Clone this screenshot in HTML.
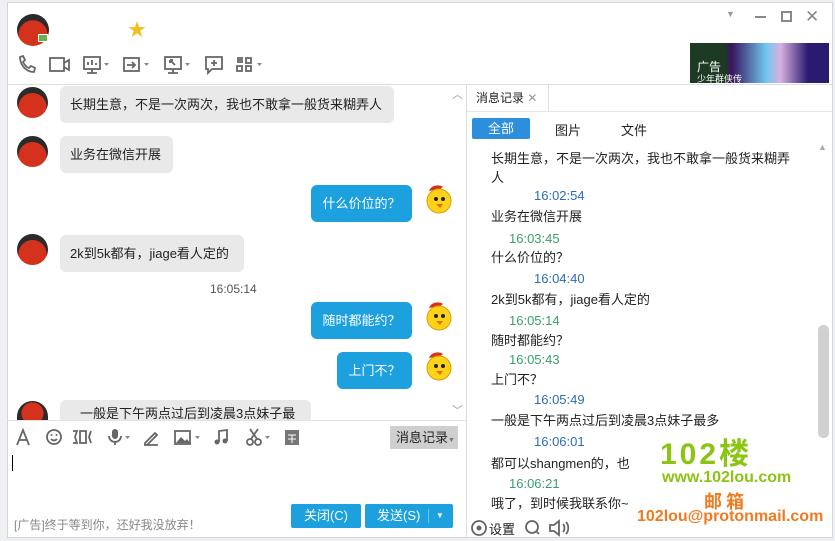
<!DOCTYPE html>
<html><head><meta charset="utf-8"><style>
*{margin:0;padding:0;box-sizing:border-box}
body{width:835px;height:541px;overflow:hidden;background:#eef0f3;font-family:"Liberation Sans","Noto Sans CJK SC",sans-serif;font-size:13px;color:#222;position:relative}
.a{position:absolute}
.win{left:7px;top:2px;width:826px;height:536px;background:#fff;border:1px solid #d5d5d5}
.bl{background:#e9e9e9;border-radius:6px;padding:0 10px;line-height:37px;height:37px;font-size:13px}
.br{background:#1ca0de;color:#fff;border-radius:6px;line-height:37px;height:37px;text-align:center}
.av{width:31px;height:31px;border-radius:50%;background:radial-gradient(circle at 50% 65%,#d4321c 0 55%,#2b2b2b 56%)}
.ch{width:30px;height:32px}
.ic{stroke:#666;fill:none;stroke-width:1.8}
.r{font-size:13px;line-height:16px}
.tg{color:#3a9e6a}.tb{color:#2a6db5}
</style></head><body>
<div class="a win"></div>
<div class="a av" style="left:17px;top:14px;width:32px;height:32px"></div>
<div class="a" style="left:38px;top:34px;width:10px;height:8px;background:#6ab04c;border:1px solid #fff"></div>
<div class="a" style="left:128px;top:16px;color:#f0c020;font-size:18px">★</div>
<div class="a" style="left:726px;top:9px;color:#999;font-size:9px">▼</div>
<div class="a" style="left:755px;top:16px;width:11px;height:2px;background:#888"></div>
<div class="a" style="left:781px;top:11px;width:11px;height:11px;border:2px solid #888"></div>
<div class="a" style="left:805px;top:7px;color:#888;font-size:17px">✕</div>
<div class="a" style="left:690px;top:43px;width:139px;height:40px;background:linear-gradient(90deg,#1d3a24 0 25%,#3a1560 30%,#6fc8f0 55%,#d9b0e0 65%,#2a1a70 85%)"></div>
<div class="a" style="left:697px;top:62px;color:#fff;font-size:12px;line-height:11px">广告<br><span style="font-size:9px">少年群侠传</span></div>
<svg class="a" style="left:17px;top:54px" width="250" height="22">
<path class="ic" d="M3 3c0 8 6 15 14 15l1-4-4-2-2 2c-3-1-5-4-6-6l2-2-2-4z"/>
<rect class="ic" x="33" y="4" width="14" height="13"/><path class="ic" d="M47 9l5-3v10l-5-3"/>
<rect class="ic" x="67" y="3" width="16" height="12"/><path class="ic" d="M75 15v4M70 19h10M71 11v-3M75 11v-5M79 11v-2"/>
<path d="M87 9h5l-2.5 3z" fill="#888"/>
<rect class="ic" x="107" y="4" width="15" height="13"/><path class="ic" d="M110 11h8M115 8l3 3-3 3"/><path d="M127 9h5l-2.5 3z" fill="#888"/>
<rect class="ic" x="148" y="3" width="16" height="12"/><path class="ic" d="M156 15v4M151 19h10M153 6l5 5M153 6h3M153 6v3"/><path d="M168 9h5l-2.5 3z" fill="#888"/>
<path class="ic" d="M189 3h16v12h-10l-4 4v-4h-2z"/><path class="ic" d="M197 6v6M194 9h6"/>
<rect x="220" y="3" width="6" height="6" fill="#777"/><rect class="ic" x="229" y="4" width="5" height="5"/><rect class="ic" x="220" y="12" width="5" height="5"/><rect class="ic" x="229" y="12" width="5" height="5"/><path d="M240 9h5l-2.5 3z" fill="#888"/>
</svg>
<div class="a" style="left:7px;top:84px;width:826px;height:1px;background:#ddd"></div>
<div class="a av" style="left:17px;top:87px"></div>
<div class="a bl" style="left:60px;top:86px;width:334px">长期生意，不是一次两次，我也不敢拿一般货来糊弄人</div>
<div class="a av" style="left:17px;top:136px"></div>
<div class="a bl" style="left:60px;top:136px;width:113px">业务在微信开展</div>
<div class="a br" style="left:311px;top:185px;width:101px">什么价位的？</div>
<svg class="a ch" style="left:423px;top:183px" viewBox="0 0 30 32"><path d="M6 8c2-6 10-7 14-4l-3 2z" fill="#d9301c"/><circle cx="16" cy="18" r="12" fill="#ffd21a" stroke="#d9a000"/><circle cx="13" cy="16" r="2" fill="#222"/><circle cx="20" cy="16" r="2" fill="#222"/><path d="M13 21l4 4 3-4z" fill="#e07010"/></svg>
<div class="a av" style="left:17px;top:234px"></div>
<div class="a bl" style="left:60px;top:235px;width:184px">2k到5k都有，jiage看人定的</div>
<div class="a" style="left:210px;top:282px;color:#555;font-size:12px">16:05:14</div>
<div class="a br" style="left:311px;top:302px;width:101px">随时都能约？</div>
<svg class="a ch" style="left:423px;top:300px" viewBox="0 0 30 32"><path d="M6 8c2-6 10-7 14-4l-3 2z" fill="#d9301c"/><circle cx="16" cy="18" r="12" fill="#ffd21a" stroke="#d9a000"/><circle cx="13" cy="16" r="2" fill="#222"/><circle cx="20" cy="16" r="2" fill="#222"/><path d="M13 21l4 4 3-4z" fill="#e07010"/></svg>
<div class="a br" style="left:337px;top:352px;width:75px">上门不？</div>
<svg class="a ch" style="left:423px;top:350px" viewBox="0 0 30 32"><path d="M6 8c2-6 10-7 14-4l-3 2z" fill="#d9301c"/><circle cx="16" cy="18" r="12" fill="#ffd21a" stroke="#d9a000"/><circle cx="13" cy="16" r="2" fill="#222"/><circle cx="20" cy="16" r="2" fill="#222"/><path d="M13 21l4 4 3-4z" fill="#e07010"/></svg>
<div class="a av" style="left:17px;top:401px;height:19px;border-radius:16px 16px 0 0"></div>
<div class="a bl" style="left:60px;top:400px;width:251px;height:20px;border-radius:6px 6px 0 0;line-height:28px;overflow:hidden;padding-left:20px">一般是下午两点过后到凌晨3点妹子最多</div>
<div class="a" style="left:452px;top:86px;color:#999;font-size:11px">︿</div>
<div class="a" style="left:452px;top:402px;color:#999;font-size:11px">﹀</div>
<div class="a" style="left:7px;top:420px;width:459px;height:1px;background:#e5e5e5"></div>
<div class="a" style="left:466px;top:85px;width:1px;height:452px;background:#ddd"></div>
<svg class="a" style="left:15px;top:427px" width="290" height="20">
<path class="ic" d="M2 18l6-15 6 15M4 13h8"/>
<circle class="ic" cx="39" cy="10" r="7"/><circle cx="36.5" cy="8" r="1" fill="#666"/><circle cx="41.5" cy="8" r="1" fill="#666"/><path class="ic" d="M36 12c2 2 4 2 6 0"/>
<path class="ic" d="M58 4h4l-2 6 2 6h-4M65 4h6v12h-6zM76 4l-2 6 2 6"/>
<rect x="97" y="2" width="6" height="10" rx="3" fill="#666"/><path class="ic" d="M94 9a6 6 0 0 0 12 0M100 15v3"/><path d="M110 9h5l-2.5 3z" fill="#888"/>
<path class="ic" d="M130 16l10-10 2 2-10 10h-2zM129 18h14"/>
<rect class="ic" x="160" y="4" width="15" height="13"/><path d="M161 16l5-6 4 4 2-2 3 4z" fill="#666"/><path d="M180 9h5l-2.5 3z" fill="#888"/>
<path class="ic" d="M204 15V4l8-1v11"/><circle cx="202" cy="15" r="2.5" fill="#666"/><circle cx="210" cy="14" r="2.5" fill="#666"/>
<circle class="ic" cx="235" cy="15" r="3"/><circle class="ic" cx="243" cy="15" r="3"/><path class="ic" d="M236 12l7-10M242 12l-7-10"/><path d="M250 9h5l-2.5 3z" fill="#888"/>
<rect x="270" y="3" width="14" height="15" fill="#777"/><path d="M273 8h8M273 12h8M277 8v8" stroke="#fff" stroke-width="1"/>
</svg>
<div class="a" style="left:390px;top:426px;width:68px;height:23px;background:#cfcfcf;line-height:23px;padding-left:6px;font-size:13px">消息记录<span style="font-size:7px;color:#777">▼</span></div>
<div class="a" style="left:12px;top:455px;width:1px;height:16px;background:#000"></div>
<div class="a" style="left:14px;top:516px;color:#888;font-size:12px">[广告]终于等到你，还好我没放弃！</div>
<div class="a" style="left:291px;top:504px;width:70px;height:24px;background:#1ca0de;color:#fff;text-align:center;line-height:24px;border-radius:2px">关闭(C)</div>
<div class="a" style="left:365px;top:504px;width:88px;height:24px;background:#1ca0de;color:#fff;line-height:24px;border-radius:2px;padding-left:12px">发送(S)<span style="position:absolute;left:63px;top:5px;width:1px;height:14px;background:#6cc4ee"></span><span style="position:absolute;left:71px;font-size:8px">▼</span></div>
<div class="a" style="left:467px;top:85px;width:82px;height:26px;border-right:1px solid #e0e0e0;line-height:26px;padding-left:9px;font-size:12px">消息记录 <span style="color:#999">✕</span></div>
<div class="a" style="left:467px;top:111px;width:365px;height:1px;background:#e5e5e5"></div>
<div class="a" style="left:472px;top:118px;width:58px;height:21px;background:#2d8fdc;color:#fff;text-align:center;line-height:21px;border-radius:2px">全部</div>
<div class="a" style="left:555px;top:120px">图片</div>
<div class="a" style="left:621px;top:120px">文件</div>
<div class="a" style="left:818px;top:142px;color:#aaa;font-size:9px">▲</div>
<div class="a" style="left:818px;top:325px;width:11px;height:113px;background:#d0d0d0;border-radius:5px"></div>
<div class="a r" style="left:491px;top:149px;width:305px;line-height:19px">长期生意，不是一次两次，我也不敢拿一般货来糊弄人</div>
<div class="a r tb" style="left:534px;top:188px">16:02:54</div>
<div class="a r" style="left:491px;top:209px">业务在微信开展</div>
<div class="a r tg" style="left:509px;top:231px">16:03:45</div>
<div class="a r" style="left:491px;top:250px">什么价位的？</div>
<div class="a r tb" style="left:534px;top:271px">16:04:40</div>
<div class="a r" style="left:491px;top:292px">2k到5k都有，jiage看人定的</div>
<div class="a r tg" style="left:509px;top:313px">16:05:14</div>
<div class="a r" style="left:491px;top:333px">随时都能约？</div>
<div class="a r tg" style="left:509px;top:352px">16:05:43</div>
<div class="a r" style="left:491px;top:372px">上门不？</div>
<div class="a r tb" style="left:534px;top:392px">16:05:49</div>
<div class="a r" style="left:491px;top:413px">一般是下午两点过后到凌晨3点妹子最多</div>
<div class="a r tb" style="left:534px;top:434px">16:06:01</div>
<div class="a r" style="left:491px;top:456px">都可以shangmen的，也</div>
<div class="a r tg" style="left:509px;top:476px">16:06:21</div>
<div class="a r" style="left:491px;top:496px">哦了，到时候我联系你~</div>
<svg class="a" style="left:470px;top:518px" width="110" height="20"><circle class="ic" cx="9" cy="10" r="7"/><circle cx="9" cy="10" r="2.5" fill="#666"/><circle class="ic" cx="62" cy="9" r="6"/><path class="ic" d="M66 13l3 3M80 7h4l5-4v14l-5-4h-4zM93 6c2 2 2 6 0 8M96 4c3 3 3 9 0 12"/></svg>
<div class="a" style="left:489px;top:519px;font-size:13px">设置</div>
<div class="a" style="left:660px;top:440px;color:#8cc414;font-size:30px;font-weight:bold;letter-spacing:3px;line-height:30px">102楼</div>
<div class="a" style="left:662px;top:469px;color:#8cc414;font-size:16px;font-weight:bold">www.102lou.com</div>
<div class="a" style="left:704px;top:488px;color:#f07a20;font-size:18px;font-weight:bold;letter-spacing:4px">邮箱</div>
<div class="a" style="left:637px;top:508px;color:#f07a20;font-size:16px;font-weight:bold">102lou@protonmail.com</div>
</body></html>
